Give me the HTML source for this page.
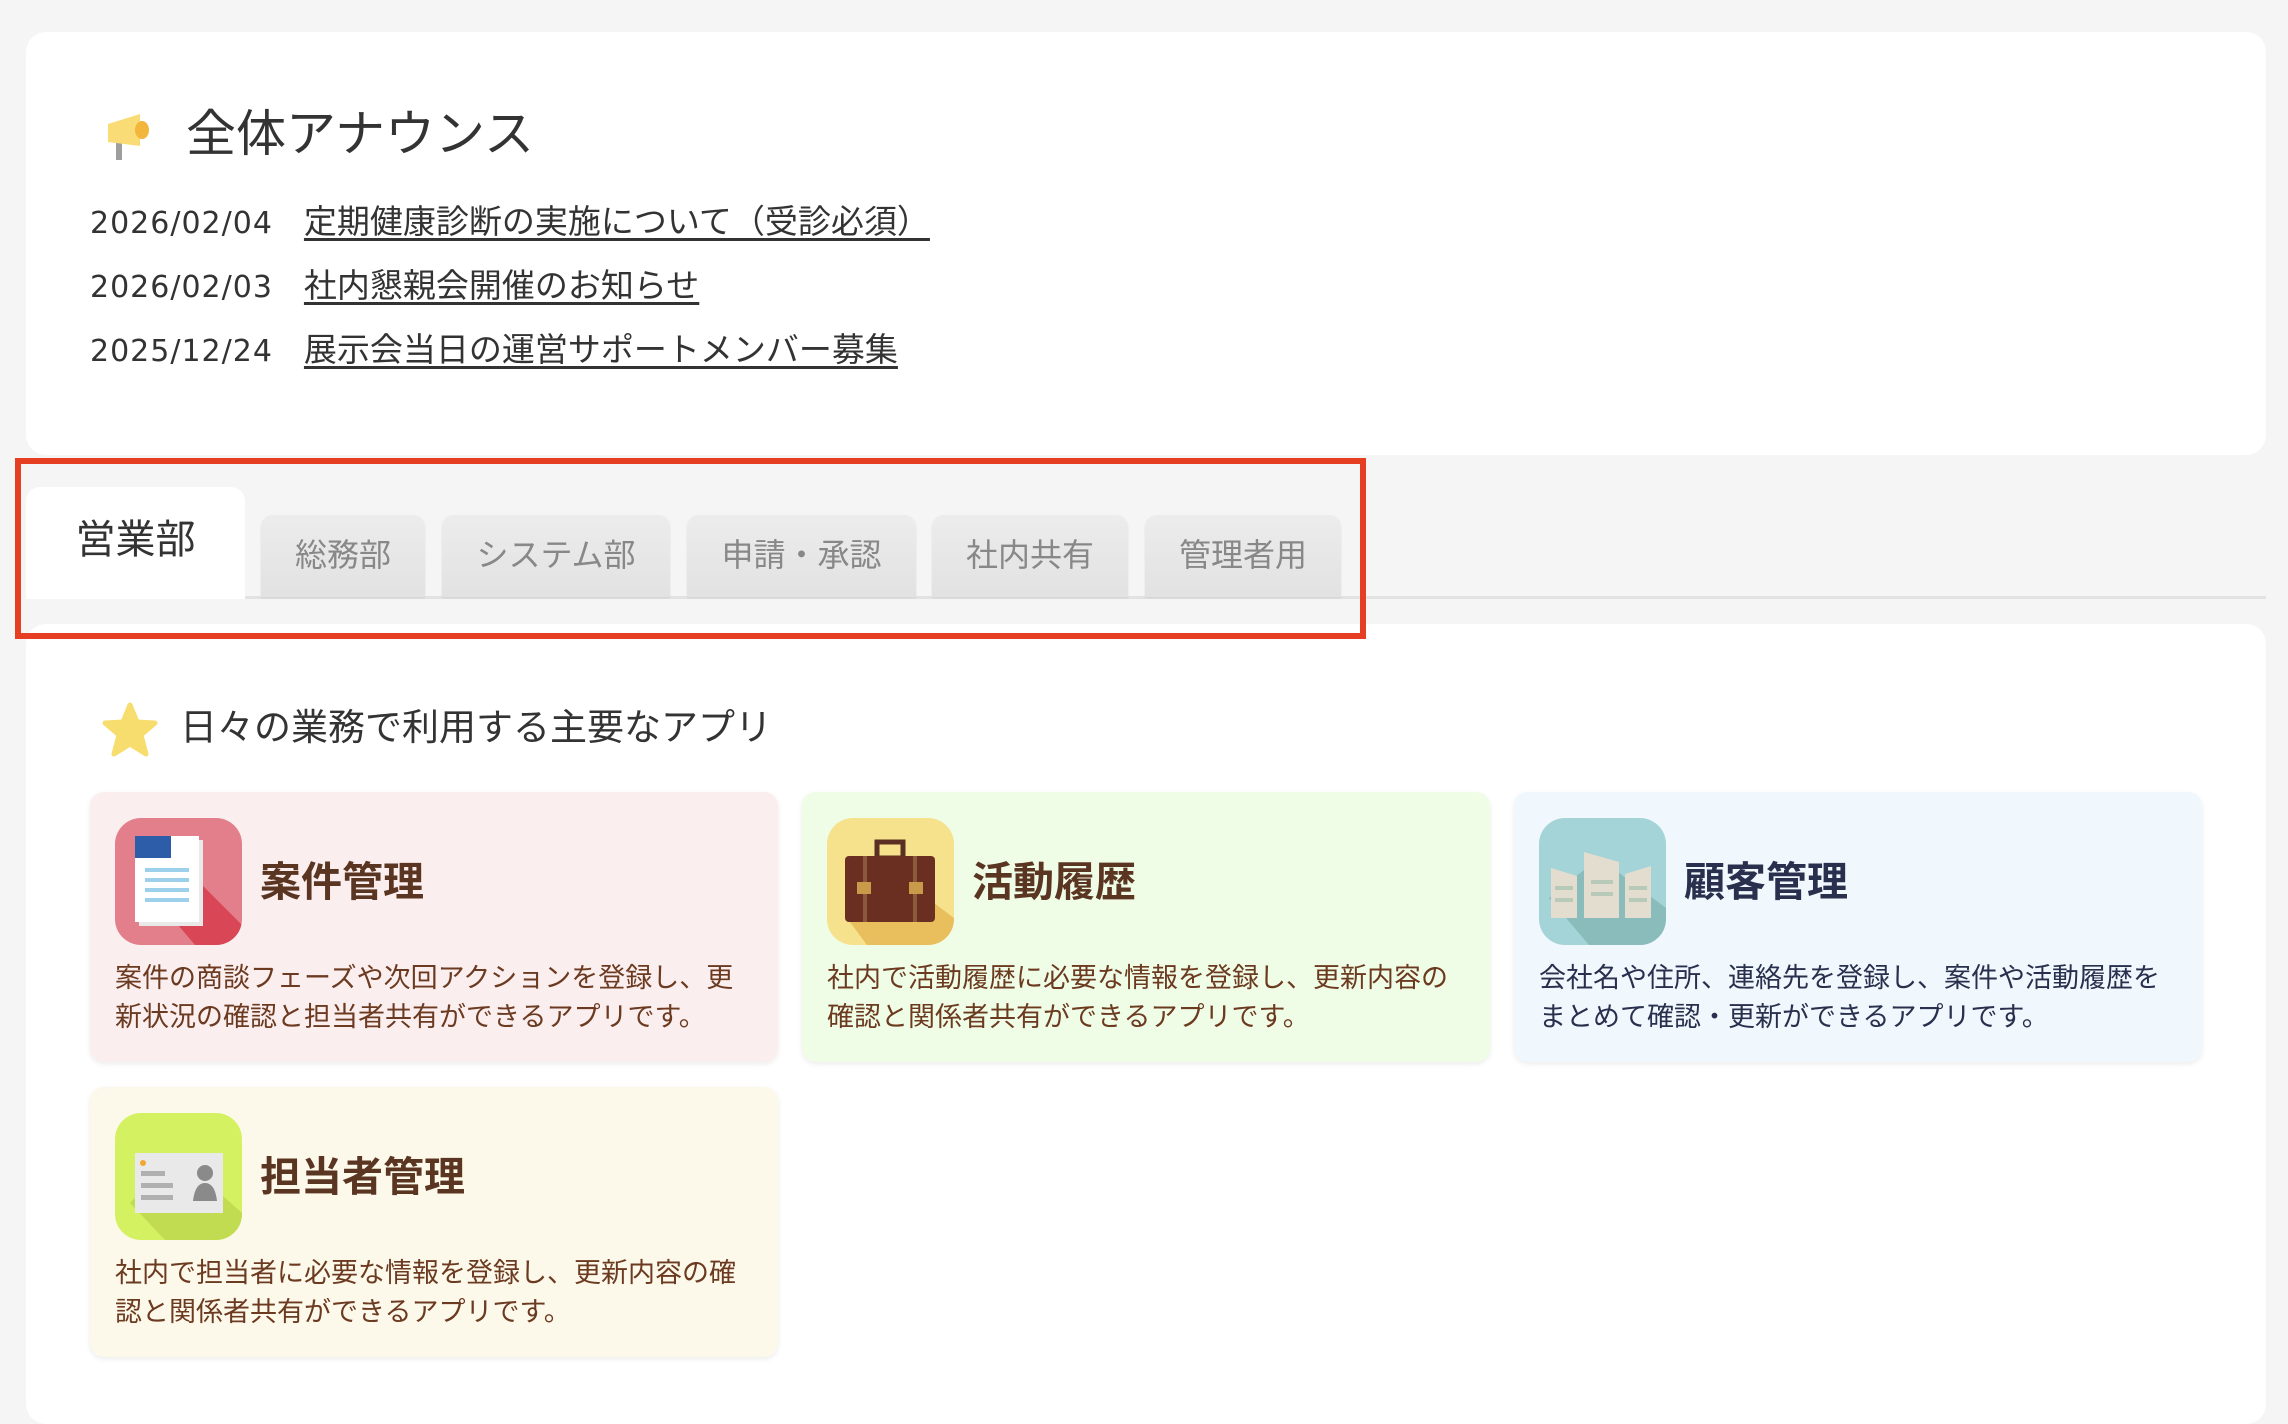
<!DOCTYPE html>
<html><head><meta charset="utf-8"><style>
*{box-sizing:border-box;margin:0;padding:0}
body{width:2288px;height:1376px;background:#f5f5f5;font-family:"Liberation Sans","Noto Sans CJK JP",sans-serif;position:relative;overflow:hidden;color:#333}
.abs{position:absolute}
.card{background:#fff;border-radius:20px}
.news{position:absolute;left:90px;font-size:33px;color:#333;white-space:nowrap;line-height:40px}
.news .d{font-family:"DejaVu Sans",sans-serif;font-size:30px;letter-spacing:1px}
.news a{color:#333;text-decoration:underline;text-underline-offset:5px;margin-left:31px}
.tab{position:absolute;top:515px;height:82px;background:linear-gradient(#ececec,#e2e2e2);border-radius:12px 12px 0 0;color:#888;font-size:32px;text-align:center;line-height:80px;box-shadow:0 1px 2px rgba(0,0,0,.08)}
.app{position:absolute;width:688px;height:270px;border-radius:14px;box-shadow:0 2px 6px rgba(0,0,0,.08)}
.app .ic{position:absolute;left:25px;top:26px;width:127px;height:127px;border-radius:26px;overflow:hidden}
.app h3{position:absolute;left:170px;top:62px;font-size:41px;font-weight:bold;color:#5a3522;line-height:56px}
.app p{position:absolute;left:25px;top:167px;width:650px;font-size:27px;line-height:39px;color:#6b3a20}
</style></head><body>
<div class="abs card" style="left:26px;top:32px;width:2240px;height:423px"></div>
<svg class="abs" style="left:104px;top:112px" width="54" height="50" viewBox="0 0 54 50"><rect x="12" y="28" width="6" height="20" fill="#9e9e9e"/><path d="M4 12 L36 2 L36 34 L4 30 Z" fill="#f9dc75"/><ellipse cx="38" cy="18" rx="7" ry="9" fill="#f2b63c"/></svg>
<div class="abs" style="left:186px;top:104px;font-size:50px;color:#333;line-height:60px">全体アナウンス</div>
<div class="news" style="top:202px"><span class="d">2026/02/04</span><a>定期健康診断の実施について（受診必須）</a></div>
<div class="news" style="top:266px"><span class="d">2026/02/03</span><a>社内懇親会開催のお知らせ</a></div>
<div class="news" style="top:330px"><span class="d">2025/12/24</span><a>展示会当日の運営サポートメンバー募集</a></div>

<div class="abs" style="left:26px;top:596px;width:2240px;height:3px;background:#e2e2e2"></div>
<div class="abs" style="left:26px;top:487px;width:219px;height:112px;background:#fff;border-radius:14px 14px 0 0;font-size:40px;color:#333;text-align:center;line-height:106px">営業部</div>
<div class="tab" style="left:261px;width:164px">総務部</div>
<div class="tab" style="left:442px;width:228px">システム部</div>
<div class="tab" style="left:687px;width:229px">申請・承認</div>
<div class="tab" style="left:932px;width:196px">社内共有</div>
<div class="tab" style="left:1145px;width:196px">管理者用</div>

<div class="abs card" style="left:26px;top:624px;width:2240px;height:800px"></div>
<div class="abs" style="left:15px;top:458px;width:1351px;height:181px;border:6px solid #e53e23"></div>

<svg class="abs" style="left:102px;top:702px" width="56" height="56" viewBox="0 0 56 56"><path d="M28 3 L35 20 L53 21 L39 33 L44 52 L28 42 L12 52 L17 33 L3 21 L21 20 Z" fill="#f7dd6e" stroke="#f7dd6e" stroke-width="5" stroke-linejoin="round"/></svg>
<div class="abs" style="left:180px;top:705px;font-size:37px;color:#333;line-height:46px">日々の業務で利用する主要なアプリ</div>

<div class="app" style="left:90px;top:792px;background:#fbeeee">
<div class="ic" style="background:#e37f8b"><svg width="127" height="127"><path d="M60 40 L127 107 L127 127 L80 127 L40 80 Z" fill="#d94656"/><rect x="24" y="22" width="64" height="86" fill="#e9e9e9"/><rect x="20" y="18" width="64" height="86" fill="#fff"/><rect x="20" y="18" width="36" height="22" fill="#2d5ca8"/><g fill="#9dd0ea"><rect x="30" y="50" width="44" height="4"/><rect x="30" y="60" width="44" height="4"/><rect x="30" y="70" width="44" height="4"/><rect x="30" y="80" width="44" height="4"/></g></svg></div>
<h3>案件管理</h3><p>案件の商談フェーズや次回アクションを登録し、更<br>新状況の確認と担当者共有ができるアプリです。</p></div>

<div class="app" style="left:802px;top:792px;background:#f0fde6">
<div class="ic" style="background:#f6e18c"><svg width="127" height="127"><path d="M60 50 L127 100 L127 127 L40 127 L20 100 Z" fill="#e8bf5c"/><rect x="50" y="24" width="26" height="16" fill="none" stroke="#5a3022" stroke-width="5"/><rect x="18" y="38" width="90" height="66" rx="4" fill="#6b2f22"/><rect x="36" y="38" width="4" height="66" fill="#8a5a3a"/><rect x="86" y="38" width="4" height="66" fill="#8a5a3a"/><rect x="30" y="64" width="14" height="12" fill="#c99a4a"/><rect x="82" y="64" width="14" height="12" fill="#c99a4a"/></svg></div>
<h3>活動履歴</h3><p>社内で活動履歴に必要な情報を登録し、更新内容の<br>確認と関係者共有ができるアプリです。</p></div>

<div class="app" style="left:1514px;top:792px;background:#f0f7fd">
<div class="ic" style="background:#a4d4d7"><svg width="127" height="127"><path d="M60 40 L127 90 L127 127 L50 127 L10 80 Z" fill="#8bbcbc"/><g fill="#e3ddd0"><path d="M12 50 L38 58 L38 100 L12 100 Z"/><path d="M45 34 L80 44 L80 100 L45 100 Z"/><path d="M86 56 L112 48 L112 100 L86 100 Z"/></g><g fill="#b7c9b8"><rect x="16" y="68" width="18" height="4"/><rect x="16" y="80" width="18" height="4"/><rect x="52" y="62" width="22" height="4"/><rect x="52" y="74" width="22" height="4"/><rect x="90" y="68" width="18" height="4"/><rect x="90" y="80" width="18" height="4"/></g></svg></div>
<h3 style="color:#28304d">顧客管理</h3><p style="color:#28304d">会社名や住所、連絡先を登録し、案件や活動履歴を<br>まとめて確認・更新ができるアプリです。</p></div>

<div class="app" style="left:90px;top:1087px;background:#fdf9ea">
<div class="ic" style="background:#d4f162"><svg width="127" height="127"><path d="M60 40 L127 100 L127 127 L50 127 L15 90 Z" fill="#c2dc52"/><rect x="20" y="40" width="88" height="60" fill="#e9e9e9"/><circle cx="28" cy="50" r="3" fill="#f0a830"/><rect x="26" y="58" width="24" height="5" fill="#b0b0b0"/><rect x="26" y="70" width="32" height="5" fill="#b0b0b0"/><rect x="26" y="82" width="32" height="5" fill="#b0b0b0"/><circle cx="90" cy="60" r="8" fill="#8a8a8a"/><path d="M78 88 Q80 70 90 70 Q100 70 102 88 Z" fill="#8a8a8a"/></svg></div>
<h3>担当者管理</h3><p>社内で担当者に必要な情報を登録し、更新内容の確<br>認と関係者共有ができるアプリです。</p></div>
</body></html>
